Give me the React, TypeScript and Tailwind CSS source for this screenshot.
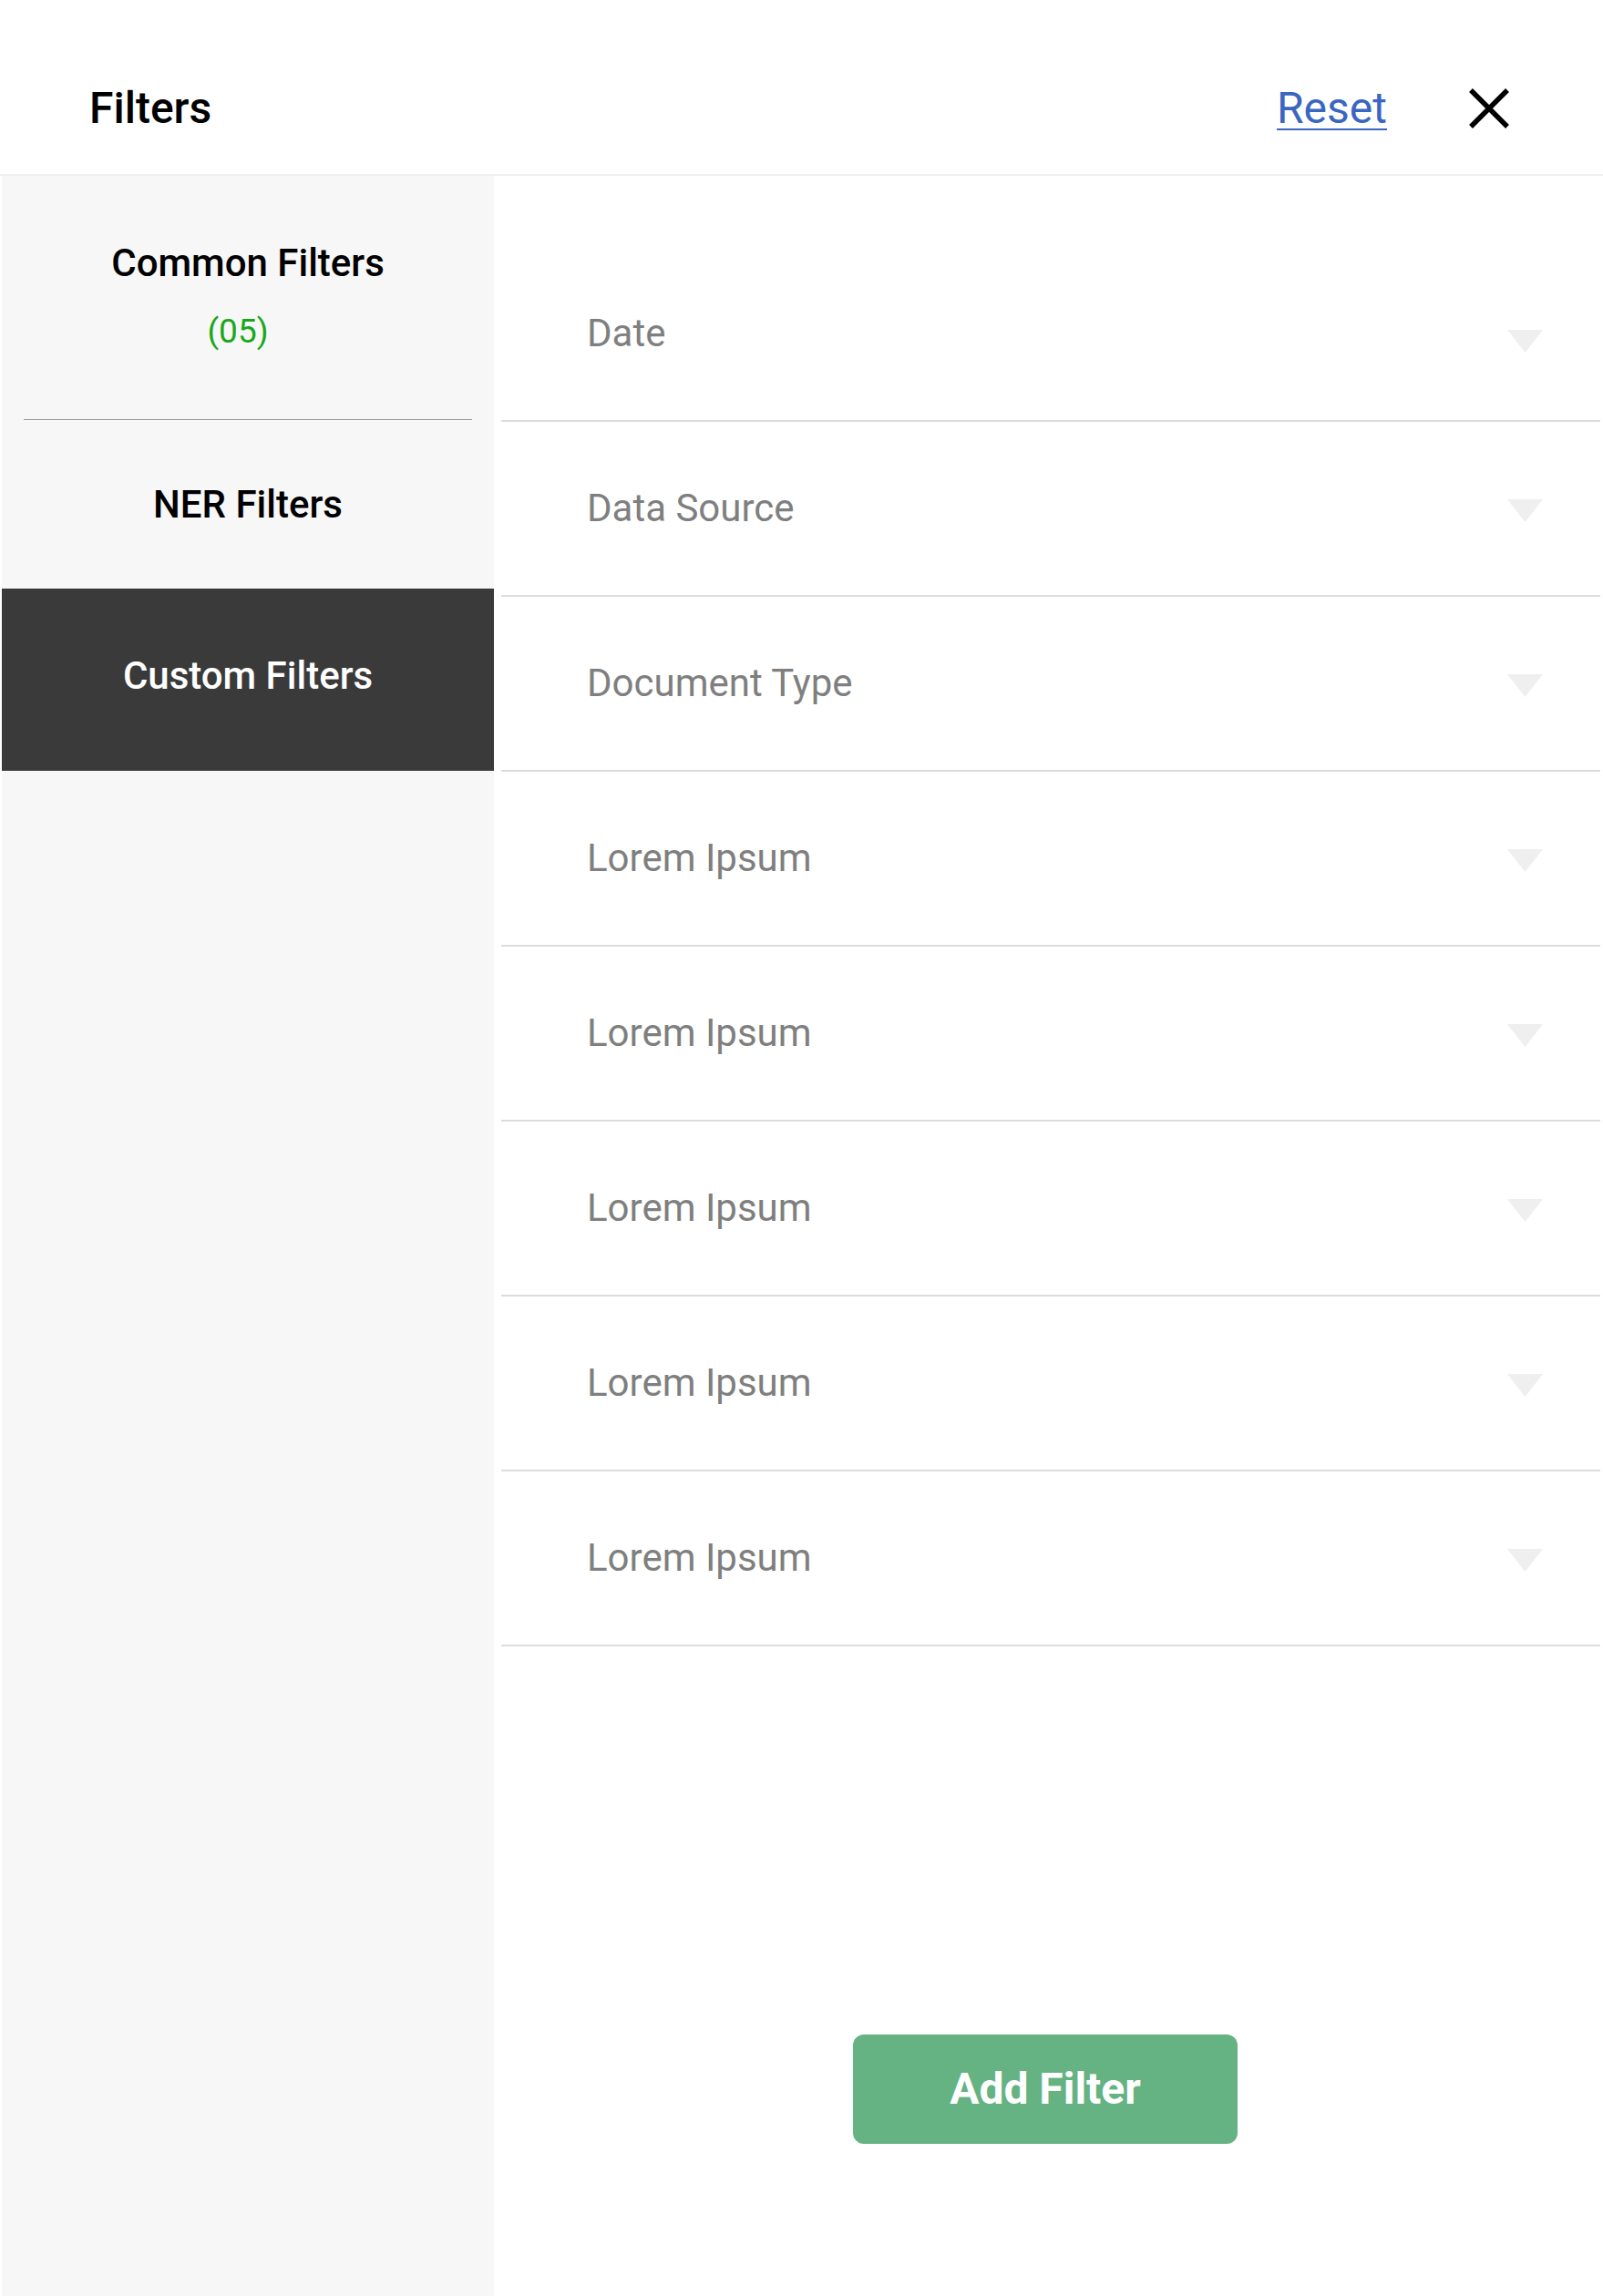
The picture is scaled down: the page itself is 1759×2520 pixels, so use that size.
import React from "react";

const FILTER_ROWS = [
  "Date",
  "Data Source",
  "Document Type",
  "Lorem Ipsum",
  "Lorem Ipsum",
  "Lorem Ipsum",
  "Lorem Ipsum",
  "Lorem Ipsum",
];

const CloseIcon = () => (
  <svg width="44" height="44" viewBox="0 0 44 44" fill="none">
    <path d="M2 2 L42 42 M42 2 L2 42" stroke="#000" strokeWidth="5.5" />
  </svg>
);

const Caret = ({ first }: { first: boolean }) => (
  <svg
    width="39"
    height="25"
    viewBox="0 0 39 25"
    className={first ? "mt-[16px]" : "mt-[4px]"}
  >
    <polygon points="0,0 39,0 19.5,25" fill="#efefef" />
  </svg>
);

const FilterRow = ({ label, first }: { label: string; first: boolean }) => (
  <div className="h-[192px] flex flex-row items-center justify-between border-b-2 border-[#dcdcdc] pl-[94px] pr-[63px]">
    <span className="text-[42px] leading-[50px] text-[#7f7f7f]">{label}</span>
    <Caret first={first} />
  </div>
);

const Sidebar = () => (
  <aside className="w-[540px] ml-[2px] bg-[#f7f7f7] flex flex-col">
    {/*common*/}
    <section className="h-[267px] flex flex-col items-center pt-[71px]">
      <span className="text-[42px] leading-[50px] font-medium text-black">
        Common Filters
      </span>
      <span className="mt-[28px] mr-[22px] text-[37px] leading-[44px] text-[#1aa81a]">
        (05)
      </span>
    </section>
    <div className="mx-[24px] h-px bg-[#9a9a9a]" />
    {/*ner*/}
    <section className="h-[185px] flex items-center justify-center">
      <span className="text-[42px] leading-[50px] font-medium text-black">
        NER Filters
      </span>
    </section>
    {/*custom*/}
    <section className="h-[200px] flex items-center justify-center bg-[#3a3a3a] pb-[8px]">
      <span className="text-[42px] leading-[50px] font-medium text-white">
        Custom Filters
      </span>
    </section>
  </aside>
);

export default function App() {
  return (
    <div
      className="w-full h-[2520px] flex flex-col bg-white overflow-hidden"
      style={{ fontFamily: "Roboto, 'Liberation Sans', sans-serif" }}
    >
      <header className="h-[193px] shrink-0 flex flex-row items-center justify-between pt-[46px] pl-[98px] pr-[103px] border-b-2 border-[#efefef]">
        <h1 className="text-[48px] leading-[48px] font-medium text-black">
          Filters
        </h1>
        <div className="flex flex-row items-center gap-[90px]">
          <a
            href="#"
            className="text-[48px] leading-[48px] text-[#3a66c1] underline decoration-2 underline-offset-[6px]"
          >
            Reset
          </a>
          <CloseIcon />
        </div>
      </header>
      <div className="flex-1 flex flex-row">
        <Sidebar />
        <main className="flex-1 flex flex-col pt-[78px] pl-[8px] pr-[3px]">
          {FILTER_ROWS.map((label, i) => (
            <FilterRow key={i} label={label} first={i === 0} />
          ))}
          <div className="mt-[426px] flex justify-center pr-[12px]">
            <button className="w-[422px] h-[120px] rounded-[12px] bg-[#65b282] text-white text-[48px] font-bold">
              Add Filter
            </button>
          </div>
        </main>
      </div>
    </div>
  );
}
